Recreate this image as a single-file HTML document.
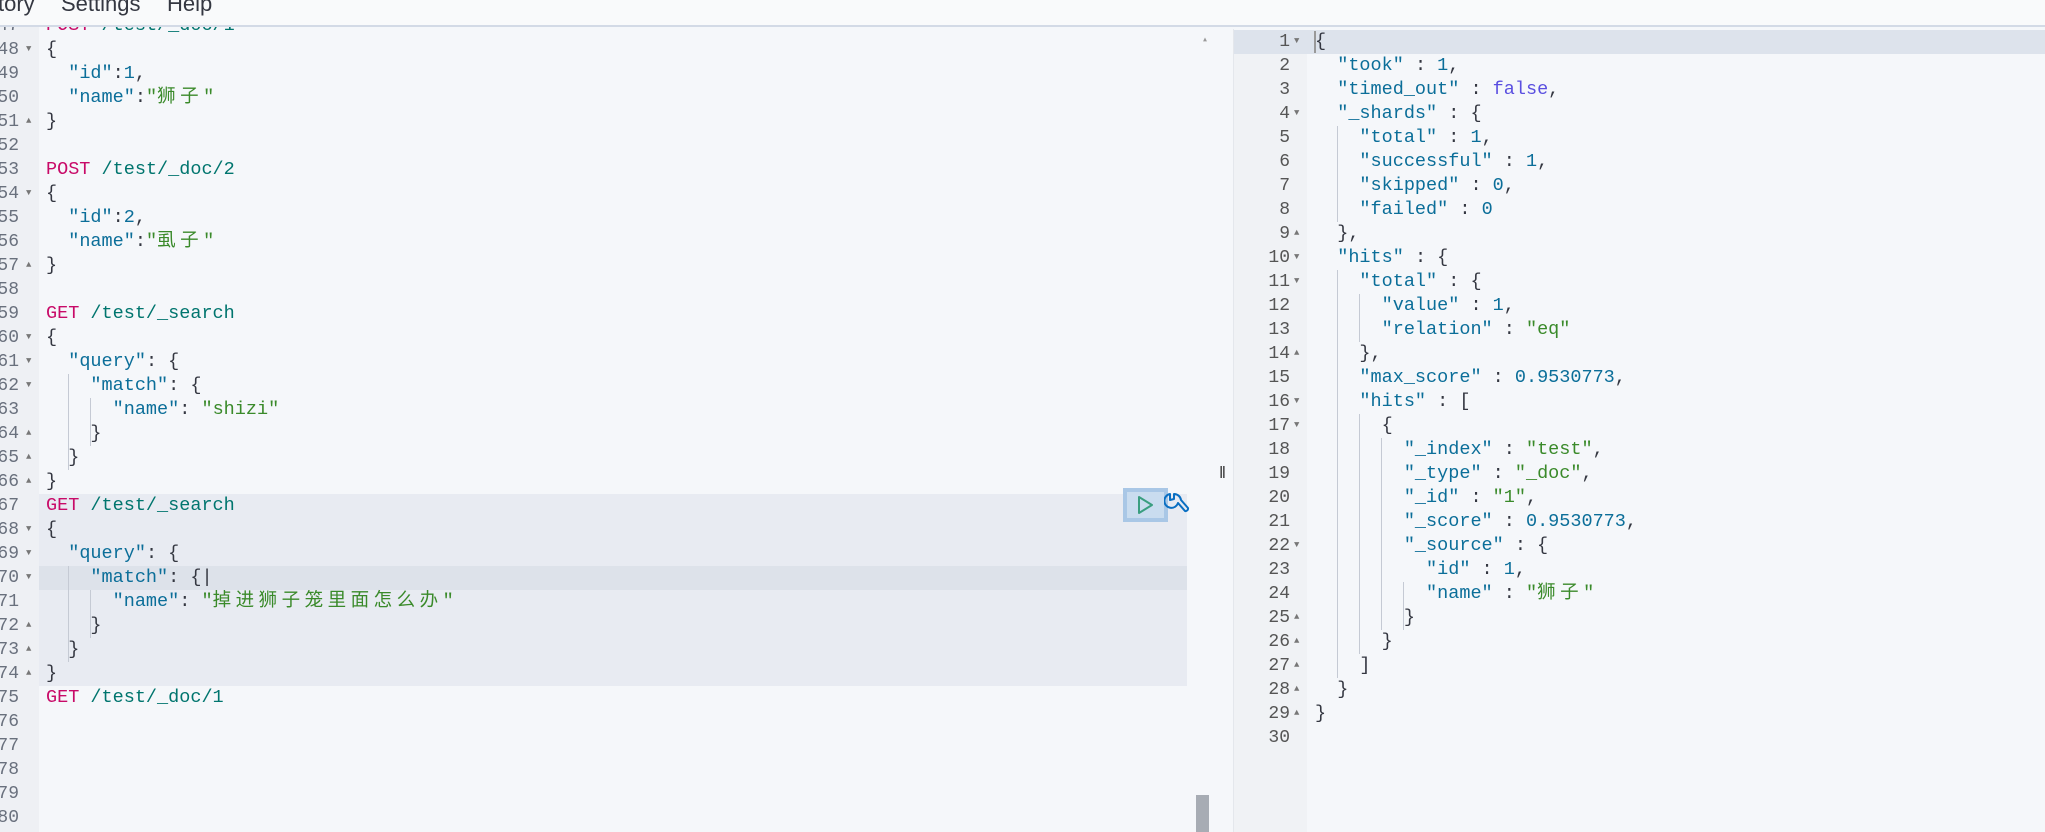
<!DOCTYPE html>
<html><head><meta charset="utf-8"><style>
*{margin:0;padding:0;box-sizing:border-box}
body{width:2045px;height:832px;overflow:hidden;background:#f5f7fa;position:relative;font-family:"Liberation Mono","Noto Sans CJK SC",monospace}
.top{position:absolute;left:0;top:0;width:2045px;height:27px;background:#f9fafb;border-bottom:2px solid #d3dae6;z-index:5;font-family:"Liberation Sans",sans-serif;font-size:22px;color:#343741}
.top span{position:absolute;top:-9px}
.l{position:absolute;left:0;height:24px;line-height:24px;white-space:pre}
.ln{position:absolute;text-align:right;color:#69707d}
.k{color:#c80a68}.p{color:#00756e}.s{color:#0b6e99}.g{color:#3a8a2a}.n{color:#0b6e99}.f{color:#5a4fe0}.b{color:#343741}
.c{letter-spacing:4.5px}
.ar{position:absolute;font-size:9px;color:#777}
.gd{position:absolute;width:1px;background:#c5cad4}
</style></head><body>
<div class="top"><span style="left:-2px">tory</span><span style="left:61px">Settings</span><span style="left:167px">Help</span></div>

<div style="position:absolute;left:0;top:0;width:39px;height:832px;background:#eef0f4"></div>
<div style="position:absolute;left:39px;top:494px;width:1148px;height:192px;background:#e8ebf2"></div>
<div style="position:absolute;left:39px;top:566px;width:1148px;height:24px;background:#dde2ea"></div>
<div style="position:absolute;left:1196px;top:795px;width:13px;height:37px;background:#a7acb4"></div>
<div style="position:absolute;left:1202px;top:34px;font-size:10px;color:#999">▴</div>

<div id="L" style="position:absolute;left:0;top:14px;font-size:18.5px;width:1187px"></div>

<div class="gd" style="left:68px;top:374px;height:96px"></div>
<div class="gd" style="left:90px;top:398px;height:48px"></div>
<div class="gd" style="left:68px;top:566px;height:96px"></div>
<div class="gd" style="left:90px;top:590px;height:48px"></div>

<div style="position:absolute;left:1123px;top:488px;width:45px;height:34px;background:#c9dcef;border:4px solid #a9c7e6"></div>
<svg style="position:absolute;left:1134px;top:494px" width="22" height="22" viewBox="0 0 22 22"><path d="M5 3 L18 11 L5 19 Z" fill="none" stroke="#3a9e80" stroke-width="2" stroke-linejoin="round"/></svg>
<svg style="position:absolute;left:1164px;top:491px" width="26" height="30" viewBox="0 0 26 30"><path d="M6 3 A7 7 0 1 0 14 12 L21 20 A2.5 2.5 0 0 0 24 17 L17 9 A7 7 0 0 0 10 3 L10 8 L6 9 Z" fill="none" stroke="#0a6fc2" stroke-width="2" stroke-linejoin="round"/></svg>

<div style="position:absolute;left:1219px;top:463px;font-family:'Liberation Sans',sans-serif;font-size:17px;color:#333">‖</div>

<div style="position:absolute;left:1233px;top:29px;width:812px;height:803px;background:#f5f7fa;border-left:1px solid #e4e7ec"></div>
<div style="position:absolute;left:1234px;top:30px;width:73px;height:802px;background:#f0f2f5"></div>
<div style="position:absolute;left:1234px;top:30px;width:811px;height:24px;background:#dde3ec"></div>
<div style="position:absolute;left:1314px;top:31px;width:2px;height:22px;background:#999"></div>
<div id="R" style="position:absolute;left:0;top:30px;font-size:18.5px;width:2045px"></div>
<div class="gd" style="left:1337px;top:126px;height:96px"></div>
<div class="gd" style="left:1337px;top:270px;height:408px"></div>
<div class="gd" style="left:1359px;top:294px;height:48px"></div>
<div class="gd" style="left:1359px;top:414px;height:240px"></div>
<div class="gd" style="left:1381px;top:438px;height:192px"></div>
<div class="gd" style="left:1403px;top:582px;height:48px"></div>

<script>
var L=[
[47,'<span class="k">POST</span> <span class="p">/test/_doc/1</span>',''],
[48,'<span class="b">{</span>','d'],
[49,'  <span class="s">"id"</span><span class="b">:</span><span class="n">1</span><span class="b">,</span>',''],
[50,'  <span class="s">"name"</span><span class="b">:</span><span class="g">"<span class="c">狮子</span>"</span>',''],
[51,'<span class="b">}</span>','u'],
[52,'',''],
[53,'<span class="k">POST</span> <span class="p">/test/_doc/2</span>',''],
[54,'<span class="b">{</span>','d'],
[55,'  <span class="s">"id"</span><span class="b">:</span><span class="n">2</span><span class="b">,</span>',''],
[56,'  <span class="s">"name"</span><span class="b">:</span><span class="g">"<span class="c">虱子</span>"</span>',''],
[57,'<span class="b">}</span>','u'],
[58,'',''],
[59,'<span class="k">GET</span> <span class="p">/test/_search</span>',''],
[60,'<span class="b">{</span>','d'],
[61,'  <span class="s">"query"</span><span class="b">: {</span>','d'],
[62,'    <span class="s">"match"</span><span class="b">: {</span>','d'],
[63,'      <span class="s">"name"</span><span class="b">: </span><span class="g">"shizi"</span>',''],
[64,'    <span class="b">}</span>','u'],
[65,'  <span class="b">}</span>','u'],
[66,'<span class="b">}</span>','u'],
[67,'<span class="k">GET</span> <span class="p">/test/_search</span>',''],
[68,'<span class="b">{</span>','d'],
[69,'  <span class="s">"query"</span><span class="b">: {</span>','d'],
[70,'    <span class="s">"match"</span><span class="b">: {|</span>','d'],
[71,'      <span class="s">"name"</span><span class="b">: </span><span class="g">"<span class="c">掉进狮子笼里面怎么办</span>"</span>',''],
[72,'    <span class="b">}</span>','u'],
[73,'  <span class="b">}</span>','u'],
[74,'<span class="b">}</span>','u'],
[75,'<span class="k">GET</span> <span class="p">/test/_doc/1</span>',''],
[76,'',''],[77,'',''],[78,'',''],[79,'',''],[80,'','']];
var h='';L.forEach(function(r,i){var y=i*24;
h+='<div class="ln" style="left:-30px;width:49px;top:'+y+'px;line-height:24px;font-size:18px">'+r[0]+'</div>';
if(r[2])h+='<div class="ar" style="left:26px;top:'+(y+6)+'px">'+(r[2]=='d'?'▼':'▲')+'</div>';
h+='<div class="l" style="left:46px;top:'+y+'px">'+r[1]+'</div>';});
document.getElementById('L').innerHTML=h;
function S(t){return '<span class="s">'+t+'</span>'}
function G(t){return '<span class="g">'+t+'</span>'}
function N(t){return '<span class="n">'+t+'</span>'}
function B(t){return '<span class="b">'+t+'</span>'}
var R=[
[B('{'),'d'],
['  '+S('"took"')+B(' : ')+N('1')+B(','),''],
['  '+S('"timed_out"')+B(' : ')+'<span class="f">false</span>'+B(','),''],
['  '+S('"_shards"')+B(' : {'),'d'],
['    '+S('"total"')+B(' : ')+N('1')+B(','),''],
['    '+S('"successful"')+B(' : ')+N('1')+B(','),''],
['    '+S('"skipped"')+B(' : ')+N('0')+B(','),''],
['    '+S('"failed"')+B(' : ')+N('0'),''],
['  '+B('},'),'u'],
['  '+S('"hits"')+B(' : {'),'d'],
['    '+S('"total"')+B(' : {'),'d'],
['      '+S('"value"')+B(' : ')+N('1')+B(','),''],
['      '+S('"relation"')+B(' : ')+G('"eq"'),''],
['    '+B('},'),'u'],
['    '+S('"max_score"')+B(' : ')+N('0.9530773')+B(','),''],
['    '+S('"hits"')+B(' : ['),'d'],
['      '+B('{'),'d'],
['        '+S('"_index"')+B(' : ')+G('"test"')+B(','),''],
['        '+S('"_type"')+B(' : ')+G('"_doc"')+B(','),''],
['        '+S('"_id"')+B(' : ')+G('"1"')+B(','),''],
['        '+S('"_score"')+B(' : ')+N('0.9530773')+B(','),''],
['        '+S('"_source"')+B(' : {'),'d'],
['          '+S('"id"')+B(' : ')+N('1')+B(','),''],
['          '+S('"name"')+B(' : ')+G('"<span class="c">狮子</span>"'),''],
['        '+B('}'),'u'],
['      '+B('}'),'u'],
['    '+B(']'),'u'],
['  '+B('}'),'u'],
[B('}'),'u'],
['','']];
h='';R.forEach(function(r,i){var y=i*24;
h+='<div class="ln" style="left:1250px;width:40px;top:'+y+'px;line-height:24px;font-size:18px;color:#555">'+(i+1)+'</div>';
if(r[1])h+='<div class="ar" style="left:1294px;top:'+(y+6)+'px">'+(r[1]=='d'?'▼':'▲')+'</div>';
h+='<div class="l" style="left:1315px;top:'+y+'px">'+r[0]+'</div>';});
document.getElementById('R').innerHTML=h;
</script>
</body></html>
